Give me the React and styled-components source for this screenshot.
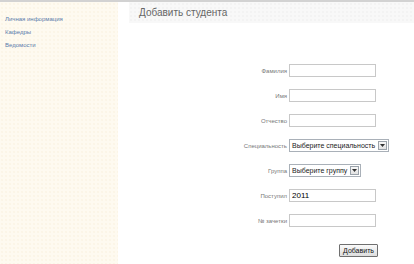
import React from "react";
import styled, { createGlobalStyle } from "styled-components";

const Global = createGlobalStyle`
  html, body { margin: 0; padding: 0; background: #fff; }
  body { font-family: "Liberation Sans", Arial, sans-serif; }
`;

const Page = styled.div`
  width: 414px;
  height: 264px;
  display: flex;
  flex-direction: column;
  overflow: hidden;
`;

const TopLine = styled.div`
  height: 2px;
  background: #d2d2d2;
  flex: none;
`;

const Body = styled.div`
  display: flex;
  flex: 1;
`;

const Sidebar = styled.nav`
  width: 118px;
  flex: none;
  background-color: #fefaf0;
  background-image: radial-gradient(#f9f0dc 0.6px, transparent 0.8px);
  background-size: 4px 4px;
  display: flex;
  flex-direction: column;
  gap: 6px;
  padding: 14px 0 0 5px;
  box-sizing: border-box;
`;

const NavLink = styled.a`
  font-size: 6px;
  line-height: 7px;
  color: #5b7bab;
  text-decoration: none;
`;

const Main = styled.main`
  flex: 1;
  margin-left: 11px;
  display: flex;
  flex-direction: column;
`;

const Header = styled.div`
  height: 21px;
  background-color: #f8f8f8;
  background-image: radial-gradient(#ededed 0.6px, transparent 0.8px);
  background-size: 4px 4px;
  display: flex;
  align-items: center;
  padding-left: 10px;
`;

const Title = styled.h1`
  margin: 0;
  font-size: 10px;
  font-weight: normal;
  color: #666;
`;

const Form = styled.form`
  margin-top: 41px;
  display: grid;
  grid-template-columns: 158px 87px;
  column-gap: 2px;
  row-gap: 12px;
  align-items: center;
  justify-items: start;
`;

const Label = styled.label`
  justify-self: end;
  font-size: 6px;
  color: #777;
`;

const Input = styled.input`
  box-sizing: border-box;
  width: 87px;
  height: 13px;
  border: 1px solid #c8c8c8;
  padding: 0 2px;
  margin: 0;
  font-family: "Liberation Sans", Arial, sans-serif;
  font-size: 8px;
  color: #000;
  background: #fff;
  outline: none;
`;

const SelectBox = styled.div`
  box-sizing: border-box;
  height: 13px;
  display: flex;
  align-items: center;
  border: 1px solid #a9b0b8;
  background: #fff;
  padding-left: 2px;
  white-space: nowrap;
`;

const SelectText = styled.span`
  font-size: 7px;
  color: #222;
  white-space: nowrap;
  padding-right: 3px;
`;

const Arrow = styled.span`
  box-sizing: border-box;
  width: 9px;
  height: 9px;
  margin-right: 1px;
  border: 1px solid #9aa2aa;
  background: linear-gradient(#f8f8f8, #e2e2e2);
  display: flex;
  align-items: center;
  justify-content: center;
  flex: none;
`;

const ButtonCell = styled.div`
  grid-column: 2;
  justify-self: end;
  margin-right: -2px;
`;

const Button = styled.button`
  box-sizing: border-box;
  height: 13px;
  padding: 0 3px;
  border: 1px solid #6f6f6f;
  border-radius: 1px;
  background: linear-gradient(#fafafa, #dedede);
  font-family: "Liberation Sans", Arial, sans-serif;
  font-size: 7px;
  color: #111;
`;

const Select = ({ text }) => (
  <SelectBox>
    <SelectText>{text}</SelectText>
    <Arrow>
      <svg width="5" height="3" viewBox="0 0 5 3">
        <path d="M0 0h5L2.5 3z" fill="#333" />
      </svg>
    </Arrow>
  </SelectBox>
);

export default function App() {
  return (
    <Page>
      <Global />
      <TopLine />
      <Body>
        <Sidebar>
          <NavLink href="#">Личная информация</NavLink>
          <NavLink href="#">Кафедры</NavLink>
          <NavLink href="#">Ведомости</NavLink>
        </Sidebar>
        <Main>
          <Header>
            <Title>Добавить студента</Title>
          </Header>
          <Form onSubmit={(e) => e.preventDefault()}>
            <Label>Фамилия</Label>
            <Input />
            <Label>Имя</Label>
            <Input />
            <Label>Отчество</Label>
            <Input />
            <Label>Специальность</Label>
            <Select text="Выберите специальность" />
            <Label>Группа</Label>
            <Select text="Выберите группу" />
            <Label>Поступил</Label>
            <Input defaultValue="2011" />
            <Label>№ зачетки</Label>
            <Input />
            <ButtonCell>
              <Button type="submit">Добавить</Button>
            </ButtonCell>
          </Form>
        </Main>
      </Body>
    </Page>
  );
}
